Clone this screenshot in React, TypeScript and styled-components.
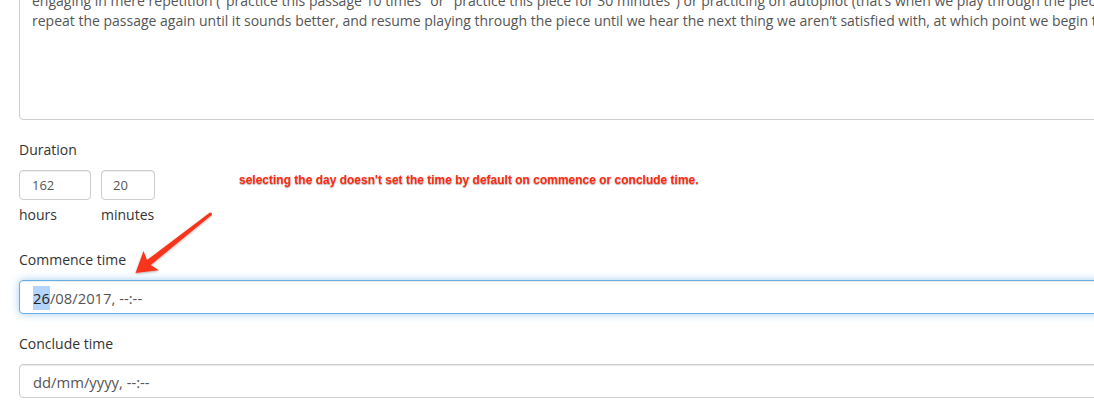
import React from "react";
import styled, { createGlobalStyle } from "styled-components";

const Global = createGlobalStyle`
  html, body { margin: 0; padding: 0; background: #fff; overflow: hidden; }
  body { font-family: "Open Sans", "Liberation Sans", sans-serif; font-size: 14px; line-height: 20px; color: #333; }
`;

const Page = styled.div`
  position: relative;
  width: 1200px;
  height: 416px;
  padding-left: 19px;
  box-sizing: border-box;
`;

const Form = styled.form`
  display: flex;
  flex-direction: column;
  width: 1120px;
`;

const TextBox = styled.div`
  box-sizing: border-box;
  margin-top: -21px;
  height: 141px;
  padding: 11px 12px;
  border: 1px solid #ccc;
  border-radius: 4px;
  color: #555;
  white-space: nowrap;
  overflow: hidden;
  box-shadow: inset 0 1px 1px rgba(0, 0, 0, 0.075);
`;

const Line = styled.div`
  height: 20px;
`;

const Group = styled.div<{ $top: number }>`
  display: flex;
  flex-direction: column;
  margin-top: ${(p) => p.$top}px;
`;

const Label = styled.label`
  display: block;
  color: #333;
  margin-bottom: 10px;
`;

const DurationRow = styled.div`
  display: flex;
  gap: 10px;
`;

const DurationCol = styled.div`
  display: flex;
  flex-direction: column;
  gap: 5px;
`;

const SmallInput = styled.div<{ $w: number; $pad: number }>`
  box-sizing: border-box;
  width: ${(p) => p.$w}px;
  height: 30px;
  padding: 5px ${(p) => p.$pad}px;
  border: 1px solid #ccc;
  border-radius: 4px;
  color: #555;
  font-size: 13px;
  line-height: 18px;
  box-shadow: inset 0 1px 1px rgba(0, 0, 0, 0.075);
`;

const Unit = styled.span`
  color: #333;
`;

const DateInput = styled.div<{ $focus?: boolean }>`
  box-sizing: border-box;
  height: 34px;
  padding: 5px 13px;
  border: 1px solid ${(p) => (p.$focus ? "#66afe9" : "#ccc")};
  border-radius: 4px;
  color: #555;
  background: #fff;
  font-size: 14.8px;
  white-space: nowrap;
  box-shadow: ${(p) =>
    p.$focus
      ? "inset 0 1px 1px rgba(0,0,0,.075), 0 0 8px rgba(102,175,233,.6)"
      : "inset 0 1px 1px rgba(0,0,0,.075)"};
`;

const Selected = styled.span`
  background: #b3d4fc;
  color: #222;
  display: inline-block;
  line-height: 24px;
  vertical-align: top;
`;

const DateText = styled.span`
  display: inline-block;
  line-height: 24px;
  vertical-align: top;
`;

const Note = styled.div`
  position: absolute;
  left: 239px;
  top: 173px;
  font-family: "Liberation Sans", Arial, sans-serif;
  font-weight: bold;
  font-size: 12px;
  line-height: 14px;
  color: #ff2a0f;
  white-space: nowrap;
  text-shadow: 0 1px 1px rgba(0, 0, 0, 0.3), 0 0 1px #fff;
`;

const Arrow = styled.svg`
  position: absolute;
  left: 130px;
  top: 208px;
  overflow: visible;
`;

export default function App() {
  return (
    <>
      <Global />
      <Page>
        <Form>
          <TextBox>
            <Line>
              engaging in mere repetition ("practice this passage 10 times" or "practice this piece for 30 minutes") or practicing on autopilot (that’s when we play through the piece and stop
            </Line>
            <Line>
              repeat the passage again until it sounds better, and resume playing through the piece until we hear the next thing we aren’t satisfied with, at which point we begin the cycle
            </Line>
          </TextBox>
          <Group $top={20}>
            <Label>Duration</Label>
            <DurationRow>
              <DurationCol>
                <SmallInput $w={72} $pad={12}>162</SmallInput>
                <Unit>hours</Unit>
              </DurationCol>
              <DurationCol>
                <SmallInput $w={54} $pad={11}>20</SmallInput>
                <Unit>minutes</Unit>
              </DurationCol>
            </DurationRow>
          </Group>
          <Group $top={25}>
            <Label>Commence time</Label>
            <DateInput $focus>
              <Selected>26</Selected>
              <DateText>/08/2017, --:--</DateText>
            </DateInput>
          </Group>
          <Group $top={20}>
            <Label>Conclude time</Label>
            <DateInput>
              <DateText>dd/mm/yyyy, --:--</DateText>
            </DateInput>
          </Group>
        </Form>
        <Note>selecting the day doesn't set the time by default on commence or conclude time.</Note>
        <Arrow width="90" height="70" viewBox="0 0 90 70">
          <defs>
            <filter id="sh" x="-20%" y="-20%" width="140%" height="140%">
              <feDropShadow dx="0" dy="1" stdDeviation="1" floodColor="#000" floodOpacity="0.3" />
            </filter>
          </defs>
          <polygon
            filter="url(#sh)"
            fill="#f8341b"
            points="5.5,65 13.5,42.9 17,52.1 79.6,4.8 81.4,7.2 20.8,56.9 28.9,62.3"
          />
          <circle cx="80.5" cy="6" r="1.5" fill="#f8341b" />
        </Arrow>
      </Page>
    </>
  );
}
